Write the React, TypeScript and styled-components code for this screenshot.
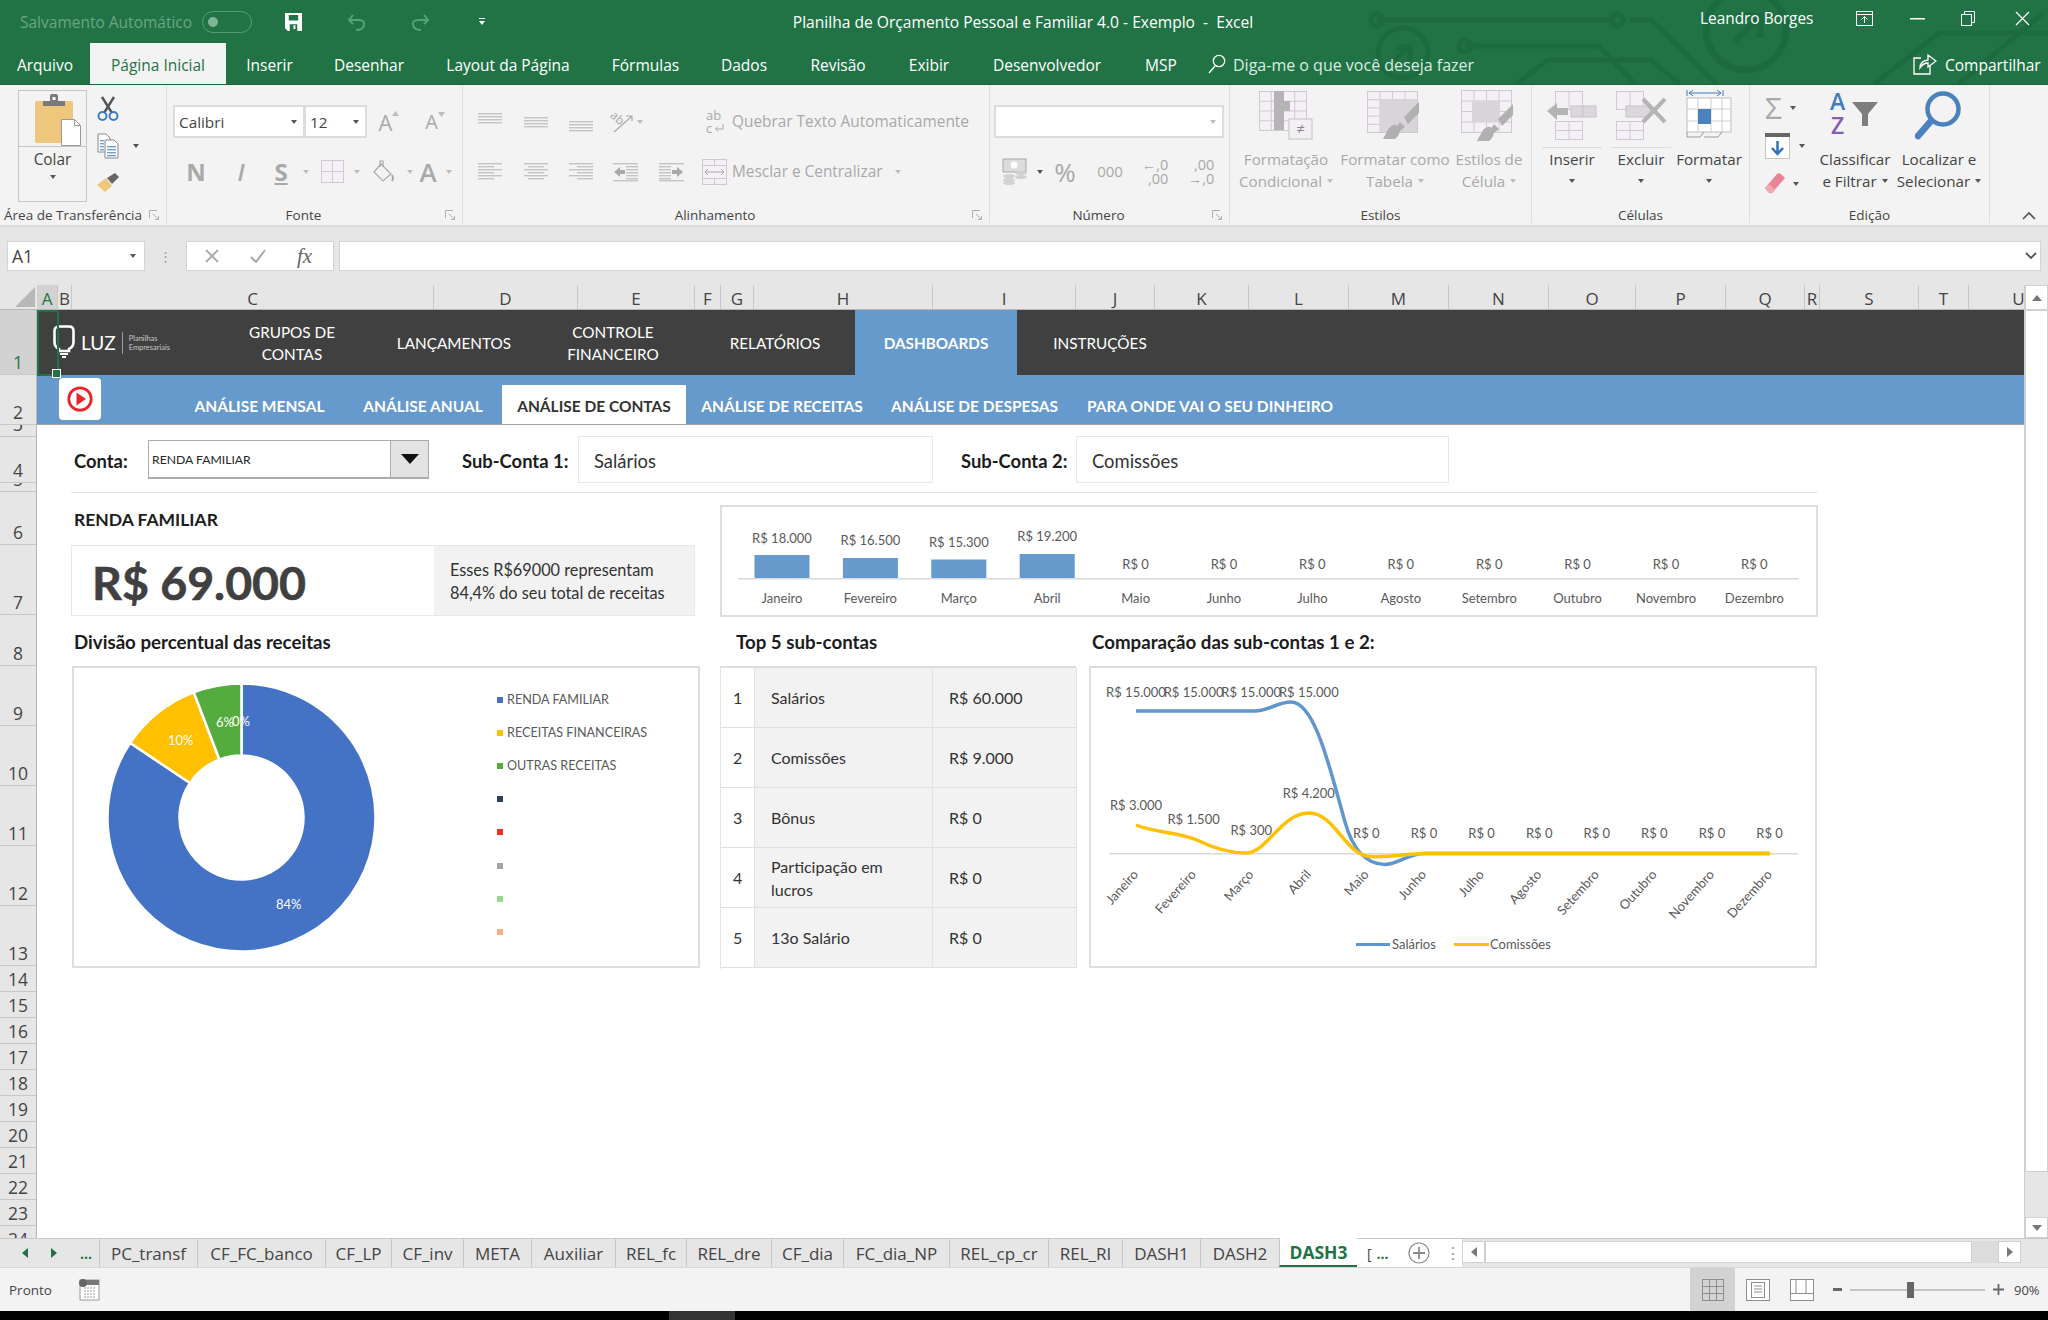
import React from 'react';
import styled, { createGlobalStyle } from 'styled-components';

const UI = `"Open Sans", "Noto Sans", sans-serif`;
const SHEET = `Lato, "Liberation Sans", sans-serif`;
const OFF = '#a9a9a9';

const GlobalStyle = createGlobalStyle`
  html, body { margin: 0; padding: 0; background: #fff; }
  body { width: 2048px; height: 1320px; overflow: hidden; font-family: ${UI}; }
  * { box-sizing: border-box; }
`;

// ---------- window frame ----------
const Page = styled.div`
  width: 2048px;
  height: 1320px;
  display: flex;
  flex-direction: column;
  overflow: hidden;
`;
const Header = styled.header`
  position: relative;
  height: 85px;
  background: #217346;
  color: #fff;
  border-bottom: 1px solid #1b6039;
`;
const Circuit = styled.svg`
  position: absolute;
  left: 0;
  top: 0;
`;
const TitleBar = styled.div`
  position: relative;
  height: 43px;
  display: flex;
  align-items: center;
`;
const AutoSave = styled.span`
  margin-left: 20px;
  width: 182px;
  font-size: 15.5px;
  color: #6aa587;
  white-space: nowrap;
`;
const Toggle = styled.span`
  width: 50px;
  height: 22px;
  flex: none;
  border: 1px solid #5a9a79;
  border-radius: 11px;
  display: flex;
  align-items: center;
  padding-left: 5px;
  &::before {
    content: '';
    width: 10px;
    height: 10px;
    border-radius: 50%;
    background: #7db59a;
  }
`;
const TitleSlot = styled.span<{ $w: number; $up?: boolean }>`
  width: ${p => p.$w}px;
  margin-top: ${p => (p.$up ? '-6px' : '0')};
  flex: none;
  display: flex;
  justify-content: center;
  align-items: center;
`;
const DocTitle = styled.span`
  margin-left: 287px;
  width: 464px;
  flex: none;
  text-align: center;
  font-size: 15.6px;
  white-space: pre;
`;
const UserName = styled.span`
  margin-left: 445px;
  margin-top: -6px;
  width: 126px;
  flex: none;
  font-size: 15.4px;
  white-space: nowrap;
`;
const TabRow = styled.nav`
  position: relative;
  height: 41px;
  display: flex;
  align-items: stretch;
`;
const MenuTab = styled.span<{ $active?: boolean; $w: number }>`
  width: ${p => p.$w}px;
  flex: none;
  display: flex;
  align-items: center;
  justify-content: center;
  padding-top: 2px;
  font-size: 15.5px;
  white-space: nowrap;
  background: ${p => (p.$active ? '#f3f3f3' : 'transparent')};
  color: ${p => (p.$active ? '#217346' : '#fff')};
`;
const SearchIconWrap = styled.span`
  margin-left: 10px;
  display: flex;
  align-items: center;
`;
const SearchHint = styled.span`
  margin-left: 7px;
  padding-top: 2px;
  width: 445px;
  font-size: 16px;
  color: #dcebe3;
  white-space: nowrap;
  display: flex;
  align-items: center;
`;
const ShareIconWrap = styled.span`
  margin-left: 235px;
  display: flex;
  align-items: center;
`;
const ShareText = styled.span`
  margin-left: 8px;
  padding-top: 2px;
  font-size: 15.5px;
  white-space: nowrap;
  display: flex;
  align-items: center;
`;

// ---------- ribbon ----------
const Ribbon = styled.section`
  height: 142px;
  display: flex;
  background: #f3f3f3;
  border-bottom: 2px solid #dcdcdc;
  color: #444;
`;
const Group = styled.div<{ $w: number }>`
  width: ${p => p.$w}px;
  flex: none;
  display: flex;
  flex-direction: column;
  border-right: 1px solid #e0e0e0;
  margin-bottom: 2px;
`;
const GroupBody = styled.div<{ $pad?: number; $column?: boolean }>`
  flex: 1;
  min-height: 0;
  display: flex;
  flex-direction: ${p => (p.$column ? 'column' : 'row')};
  padding-left: ${p => p.$pad ?? 0}px;
`;
const GroupLabel = styled.div<{ $shift?: number; $start?: boolean }>`
  position: relative;
  height: 15px;
  text-align: ${p => (p.$start ? 'left' : 'center')};
  padding-left: ${p => (p.$start ? 4 : 0)}px;
  padding-right: ${p => p.$shift ?? 0}px;
  line-height: 15px;
  font-size: 13.5px;
  white-space: nowrap;
  color: #444;
`;
const Launcher = styled.svg`
  position: absolute;
  right: 6px;
  top: 2px;
`;
const RibbonEnd = styled.div`
  flex: 1;
  display: flex;
  justify-content: flex-end;
  align-items: flex-end;
  padding: 0 12px 5px 0;
`;
const PasteButton = styled.div`
  width: 69px;
  height: 112px;
  margin-top: 5px;
  border: 1px solid #c6c6c6;
  display: flex;
  flex-direction: column;
  align-items: center;
  flex: none;
`;
const PasteIcon = styled.div`
  height: 56px;
  width: 100%;
  border-bottom: 1px solid #c6c6c6;
  display: flex;
  justify-content: center;
`;
const PasteLabel = styled.div`
  margin-top: 3px;
  height: 25px;
  font-size: 15.4px;
  line-height: 20px;
`;
const ClipTools = styled.div`
  margin: 11px 0 0 10px;
  display: flex;
  flex-direction: column;
  gap: 11px;
`;
const ClipTool = styled.div`
  display: flex;
  align-items: center;
  gap: 14px;
  height: 26px;
`;
const Caret = styled.span<{ $off?: boolean }>`
  display: inline-block;
  width: 0;
  height: 0;
  flex: none;
  border-left: 3.5px solid transparent;
  border-right: 3.5px solid transparent;
  border-top: 4px solid ${p => (p.$off ? '#bcbcbc' : '#555')};
`;
const RibbonRow = styled.div<{ $top: number }>`
  display: flex;
  align-items: center;
  height: 33px;
  margin-top: ${p => p.$top}px;
  white-space: nowrap;
`;
const Slot = styled.span<{ $w: number }>`
  width: ${p => p.$w}px;
  flex: none;
  display: flex;
  align-items: center;
  justify-content: center;
  gap: 3px;
`;
const Combo = styled.div<{ $w: number }>`
  width: ${p => p.$w}px;
  height: 33px;
  flex: none;
  background: #fff;
  border: 2px solid #dcdcdc;
  margin-right: -1px;
  display: flex;
  align-items: center;
  justify-content: space-between;
  padding: 0 6px 0 4px;
  font-size: 15.3px;
  color: #444;
`;
const Glyph = styled.span<{ $size: number; $weight?: number; $italic?: boolean; $line?: boolean }>`
  font-size: ${p => p.$size}px;
  font-weight: ${p => p.$weight ?? 400};
  font-style: ${p => (p.$italic ? 'italic' : 'normal')};
  text-decoration: ${p => (p.$line ? 'underline' : 'none')};
  line-height: 1;
  color: ${OFF};
  font-family: ${UI};
`;
const GrowGlyph = styled.span`
  display: flex;
  align-items: flex-start;
  gap: 0;
`;
const DimText = styled.span<{ $left?: number }>`
  font-size: 15.4px;
  color: ${OFF};
  margin-left: ${p => p.$left ?? 0}px;
`;
const Decimal = styled.span`
  font-size: 14.5px;
  line-height: 14px;
  color: ${OFF};
  text-align: right;
  display: block;
`;
const BigButton = styled.div<{ $w: number }>`
  width: ${p => p.$w}px;
  flex: none;
  display: flex;
  flex-direction: column;
  align-items: center;
  padding-top: 5px;
`;
const BigIcon = styled.div<{ $rule?: boolean }>`
  height: 58px;
  width: ${p => (p.$rule ? '60px' : 'auto')};
  display: flex;
  align-items: flex-start;
  justify-content: center;
  border-bottom: ${p => (p.$rule ? '1px solid #dcdcdc' : 'none')};
`;
const BigLabel = styled.div<{ $off?: boolean }>`
  font-size: 15.2px;
  line-height: 22px;
  text-align: center;
  white-space: nowrap;
  color: ${p => (p.$off ? OFF : '#444')};
  display: flex;
  flex-direction: column;
  align-items: center;
`;
const LabelLine = styled.span`
  height: 22px;
  display: flex;
  align-items: center;
  gap: 5px;
`;
const EditTools = styled.div`
  width: 71px;
  flex: none;
  padding: 9px 0 0 15px;
  display: flex;
  flex-direction: column;
  gap: 11px;
`;
const EditTool = styled.div`
  height: 27px;
  display: flex;
  align-items: center;
  gap: 8px;
`;

// ---------- formula bar ----------
const FormulaBar = styled.div`
  height: 58px;
  background: #e6e6e6;
  display: flex;
  align-items: center;
  padding: 0 7px;
`;
const NameBox = styled.div`
  width: 138px;
  height: 30px;
  background: #fff;
  border: 1px solid #d4d4d4;
  display: flex;
  align-items: center;
  justify-content: space-between;
  padding: 0 8px 0 4px;
  font-size: 17.5px;
  color: #444;
`;
const Dots = styled.span`
  width: 41px;
  text-align: center;
  color: #9a9a9a;
  font-size: 13px;
  line-height: 6px;
`;
const FxBox = styled.div`
  width: 148px;
  height: 30px;
  background: #fff;
  border: 1px solid #d4d4d4;
  display: flex;
  align-items: center;
  gap: 31px;
  padding-left: 18px;
`;
const FxText = styled.span`
  font-family: "Liberation Serif", serif;
  font-style: italic;
  font-size: 21px;
  color: #666;
`;
const FormulaInput = styled.div`
  flex: 1;
  height: 30px;
  margin-left: 5px;
  background: #fff;
  border: 1px solid #d4d4d4;
  display: flex;
  align-items: center;
  justify-content: flex-end;
  padding-right: 3px;
`;

// ---------- sheet frame ----------
const SheetArea = styled.div`
  height: 953px;
  display: flex;
`;
const SheetMain = styled.div`
  flex: 1;
  display: flex;
  flex-direction: column;
  min-width: 0;
`;
const ColumnHeader = styled.div`
  height: 25px;
  display: flex;
  overflow: hidden;
  background: #e6e6e6;
  border-bottom: 1px solid #b8b8b8;
`;
const Corner = styled.div`
  width: 37px;
  flex: none;
  display: flex;
  align-items: flex-end;
  justify-content: flex-end;
  padding: 0 2px 2px 0;
`;
const ColCell = styled.div<{ $w: number; $on?: boolean }>`
  width: ${p => p.$w}px;
  flex: none;
  text-align: center;
  font-size: 17px;
  line-height: 27px;
  overflow: hidden;
  color: ${p => (p.$on ? '#217346' : '#444')};
  background: ${p => (p.$on ? '#d2d2d2' : 'transparent')};
  border-right: 1px solid #c8c8c8;
`;
const SheetBody = styled.div`
  flex: 1;
  display: flex;
  min-height: 0;
`;
const RowHeaders = styled.div`
  width: 37px;
  flex: none;
  background: #e6e6e6;
  border-right: 1px solid #b8b8b8;
  overflow: hidden;
`;
const RowCell = styled.div<{ $h: number; $on?: boolean }>`
  height: ${p => p.$h}px;
  display: flex;
  align-items: flex-end;
  justify-content: center;
  overflow: hidden;
  font-size: 17.5px;
  line-height: 23px;
  color: ${p => (p.$on ? '#217346' : '#444')};
  background: ${p => (p.$on ? '#d2d2d2' : 'transparent')};
  border-bottom: 1px solid #c8c8c8;
`;
const Canvas = styled.main`
  position: relative;
  flex: 1;
  min-width: 0;
  overflow: hidden;
  background: #fff;
  font-family: ${SHEET};
  color: #262626;
`;
const Selection = styled.div`
  position: absolute;
  left: 0;
  top: 0;
  width: 22px;
  height: 66px;
  border: 2px solid #217346;
  &::after {
    content: '';
    position: absolute;
    right: -4px;
    bottom: -4px;
    width: 7px;
    height: 7px;
    background: #217346;
    border: 1px solid #fff;
  }
`;
const VScroll = styled.div`
  width: 24px;
  flex: none;
  display: flex;
  flex-direction: column;
  background: #e6e6e6;
  border-left: 1px solid #cfcfcf;
`;
const ScrollArrow = styled.div<{ $h: number }>`
  height: ${p => p.$h}px;
  flex: none;
  background: #fff;
  border: 1px solid #d0d0d0;
  display: flex;
  align-items: center;
  justify-content: center;
`;
const ScrollThumb = styled.div`
  height: 862px;
  flex: none;
  background: #fff;
  border: 1px solid #d0d0d0;
`;
const ScrollRest = styled.div`
  flex: 1;
`;

// ---------- dashboard nav ----------
const NavBar = styled.div`
  height: 65px;
  display: flex;
  background: #404040;
  color: #fff;
`;
const Logo = styled.div`
  width: 163px;
  flex: none;
  display: flex;
  align-items: center;
  padding-left: 15px;
`;
const LogoWord = styled.span`
  margin-left: 5px;
  font-size: 19px;
  padding-right: 6px;
  border-right: 1px solid #9a9a9a;
  line-height: 22px;
`;
const LogoSub = styled.span`
  margin-left: 6px;
  font-size: 7.5px;
  line-height: 9px;
  color: #c8c8c8;
`;
const NavItem = styled.div<{ $w: number; $gap?: number; $active?: boolean }>`
  width: ${p => p.$w}px;
  margin-right: ${p => p.$gap ?? 0}px;
  flex: none;
  display: flex;
  align-items: center;
  justify-content: center;
  text-align: center;
  font-size: 15.3px;
  line-height: 22px;
  font-weight: ${p => (p.$active ? 700 : 400)};
  background: ${p => (p.$active ? '#6699cc' : 'transparent')};
`;
const SubNav = styled.div`
  height: 50px;
  display: flex;
  align-items: flex-end;
  background: #6699cc;
  border-bottom: 1px solid #a5a5a5;
  padding-left: 22px;
`;
const PlayBox = styled.div`
  width: 42px;
  height: 42px;
  margin: 0 74px 4px 0;
  flex: none;
  background: #fff;
  border-radius: 4px;
  display: flex;
  align-items: center;
  justify-content: center;
`;
const SubItem = styled.div<{ $w: number; $active?: boolean }>`
  width: ${p => p.$w}px;
  height: 39px;
  flex: none;
  padding-top: 2px;
  display: flex;
  align-items: center;
  justify-content: center;
  font-size: 15.5px;
  font-weight: 700;
  white-space: nowrap;
  background: ${p => (p.$active ? '#fff' : 'transparent')};
  color: ${p => (p.$active ? '#333' : '#fff')};
`;
const Content = styled.div`
  margin-left: 34px;
  width: 1747px;
`;
const FilterRow = styled.div`
  height: 68px;
  padding-top: 11px;
  display: flex;
  align-items: flex-start;
  border-bottom: 1px solid #e4e4e4;
`;
const FilterLabel = styled.span<{ $left: number; $w: number }>`
  margin-left: ${p => p.$left}px;
  width: ${p => p.$w}px;
  height: 47px;
  padding-top: 2px;
  flex: none;
  display: flex;
  align-items: center;
  font-size: 18.4px;
  font-weight: 700;
  color: #1c1c1c;
  white-space: nowrap;
`;
const Select = styled.div`
  width: 281px;
  height: 39px;
  margin-top: 4px;
  flex: none;
  display: flex;
  border: 1px solid #ababab;
  border-bottom-width: 2px;
  align-items: center;
  justify-content: space-between;
  font-size: 12.2px;
  padding-left: 3px;
`;
const SelectArrow = styled.span`
  width: 38px;
  height: 100%;
  background: #e3e3e3;
  border-left: 1px solid #ababab;
  display: flex;
  align-items: center;
  justify-content: center;
  &::before {
    content: '';
    border-left: 9px solid transparent;
    border-right: 9px solid transparent;
    border-top: 10px solid #111;
  }
`;
const ValueBox = styled.div<{ $w: number }>`
  width: ${p => p.$w}px;
  height: 47px;
  flex: none;
  border: 1px solid #e8e8e8;
  display: flex;
  align-items: center;
  padding: 2px 0 0 15px;
  font-size: 18.4px;
  color: #333;
`;
const TopRow = styled.div`
  height: 124px;
  display: flex;
  gap: 25px;
`;
const KpiColumn = styled.div`
  width: 624px;
  flex: none;
`;
const SectionTitle = styled.h2<{ $h: number; $left?: number; $size?: number }>`
  margin: 0;
  height: ${p => p.$h}px;
  padding-left: ${p => p.$left ?? 3}px;
  display: flex;
  align-items: center;
  font-size: ${p => p.$size ?? 18.7}px;
  font-weight: 700;
  color: #1c1c1c;
  white-space: nowrap;
`;
const Kpi = styled.div`
  height: 71px;
  display: flex;
  border: 1px solid #e8e8e8;
`;
const KpiValue = styled.div`
  width: 362px;
  flex: none;
  padding: 4px 0 0 20px;
  display: flex;
  align-items: center;
  font-size: 46.5px;
  font-weight: 700;
  color: #404040;
  -webkit-text-stroke: 0.6px #404040;
  white-space: nowrap;
  line-height: 1;
`;
const KpiNote = styled.div`
  flex: 1;
  background: #f2f2f2;
  padding-left: 16px;
  display: flex;
  flex-direction: column;
  justify-content: center;
  font-size: 16.3px;
  line-height: 23px;
  color: #333;
  white-space: nowrap;
`;
const BarCard = styled.div`
  width: 1098px;
  height: 112px;
  margin-top: 12px;
  border: 2px solid #dedede;
`;
const ChartSvg = styled.svg`
  display: block;
  font-family: ${SHEET};
  font-size: 13px;
  fill: #595959;
`;
const BottomRow = styled.div`
  display: flex;
  margin-left: 1px;
`;
const Panel = styled.div<{ $w: number; $gap: number }>`
  width: ${p => p.$w}px;
  flex: none;
  margin-right: ${p => p.$gap}px;
`;
const Card = styled.div`
  height: 302px;
  border: 2px solid #dedede;
  display: flex;
`;
const Legend = styled.ul`
  list-style: none;
  margin: 0;
  padding: 15px 0 0 25px;
  display: flex;
  flex-direction: column;
`;
const LegendItem = styled.li`
  height: 33.2px;
  display: flex;
  align-items: center;
  gap: 4px;
  font-size: 12.6px;
  color: #595959;
  white-space: nowrap;
`;
const LegendDot = styled.span<{ $color: string }>`
  width: 6px;
  height: 6px;
  background: ${p => p.$color};
`;
const TopTable = styled.div`
  height: 303px;
  display: grid;
  grid-template-columns: 34px 178px 144px;
  grid-auto-rows: 60px;
  border-top: 2px solid #dedede;
  border-left: 1px solid #e4e4e4;
`;
const TopCell = styled.div<{ $shade?: boolean }>`
  display: flex;
  align-items: center;
  padding: 0 ${p => (p.$shade ? 24 : 0)}px 0 ${p => (p.$shade ? 16 : 12)}px;
  font-size: 16px;
  line-height: 23px;
  color: #333;
  background: ${p => (p.$shade ? '#f2f2f2' : '#fff')};
  border-bottom: 1.5px solid #dedede;
  border-right: 1px solid #e2e2e2;
`;

// ---------- sheet tabs + status ----------
const TabsBar = styled.div`
  height: 30px;
  display: flex;
  align-items: stretch;
  background: #e6e6e6;
  border-top: 1px solid #c8c8c8;
  border-bottom: 1px solid #d6d6d6;
`;
const TabNav = styled.div`
  width: 99px;
  flex: none;
  display: flex;
  align-items: center;
  padding-left: 22px;
  gap: 23px;
  color: #217346;
  font-size: 14px;
  font-weight: 700;
`;
const SheetTab = styled.div<{ $w: number; $active?: boolean }>`
  width: ${p => p.$w}px;
  flex: none;
  display: flex;
  align-items: center;
  justify-content: center;
  font-size: ${p => (p.$active ? 17.5 : 17)}px;
  white-space: nowrap;
  overflow: hidden;
  font-weight: ${p => (p.$active ? 700 : 400)};
  color: ${p => (p.$active ? '#217346' : '#444')};
  background: ${p => (p.$active ? '#fff' : 'transparent')};
  border-left: 1px solid #c8c8c8;
  border-bottom: ${p => (p.$active ? '2px solid #217346' : 'none')};
  margin-top: ${p => (p.$active ? '-1px' : '0')};
`;
const MoreTab = styled.div`
  width: 43px;
  flex: none;
  display: flex;
  align-items: center;
  padding-left: 10px;
  gap: 5px;
  font-size: 14px;
  color: #444;
  white-space: nowrap;
  background: #fff;
  overflow: hidden;
`;
const MoreDots = styled.span`
  color: #217346;
  font-weight: 700;
`;
const AddSheet = styled.div`
  width: 62px;
  flex: none;
  display: flex;
  align-items: center;
  padding-left: 8px;
  gap: 15px;
  color: #9a9a9a;
  background: #fff;
`;
const HScroll = styled.div`
  flex: 1;
  margin: 2px 27px 4px 0;
  display: flex;
  background: #dcdcdc;
`;
const HArrow = styled.div`
  width: 23px;
  flex: none;
  background: #fff;
  border: 1px solid #d0d0d0;
  display: flex;
  align-items: center;
  justify-content: center;
`;
const HThumb = styled.div`
  width: 487px;
  flex: none;
  background: #fff;
  border: 1px solid #d0d0d0;
`;
const HSpace = styled.div`
  flex: 1;
`;
const StatusBar = styled.footer`
  height: 43px;
  background: #f3f3f3;
  display: flex;
  align-items: stretch;
  color: #444;
  font-size: 13.5px;
`;
const StatusLeft = styled.div`
  flex: 1;
  display: flex;
  align-items: center;
  padding-left: 9px;
  gap: 27px;
`;
const ViewButton = styled.div<{ $w: number; $active?: boolean }>`
  width: ${p => p.$w}px;
  flex: none;
  display: flex;
  align-items: center;
  justify-content: center;
  background: ${p => (p.$active ? '#d2d2d2' : 'transparent')};
`;
const Zoomer = styled.div`
  width: 224px;
  flex: none;
  padding-left: 9px;
  display: flex;
  align-items: center;
  gap: 8px;
  font-size: 13px;
`;
const ZoomTrack = styled.div`
  position: relative;
  width: 135px;
  height: 2px;
  background: #c4c4c4;
`;
const ZoomThumb = styled.span`
  position: absolute;
  left: 57px;
  top: -7px;
  width: 7px;
  height: 16px;
  background: #666;
`;
const ZoomValue = styled.span`
  margin-left: 2px;
`;
const BlackBar = styled.div`
  height: 9px;
  background: #000;
  padding-left: 669px;
`;
const BlackKey = styled.div`
  width: 66px;
  height: 9px;
  background: #333;
`;

// ---------- icons ----------
const Bars = ({ x, y, w, rows, gap = 3, color = '#c4c4c4', insets = [] }: {
  x: number; y: number; w: number; rows: number; gap?: number; color?: string; insets?: [number, number][];
}) => (
  <>
    {Array.from({ length: rows }, (_, i) => {
      const [l, r] = insets[i % (insets.length || 1)] ?? [0, 0];
      return <rect key={i} x={x + l} y={y + i * gap} width={w - l - r} height={1.4} fill={color} />;
    })}
  </>
);

const CellGrid = ({ x, y, w, h, cols, rows, fill = '#f5f0f6', line = '#cfc9d1' }: {
  x: number; y: number; w: number; h: number; cols: number; rows: number; fill?: string; line?: string;
}) => (
  <g>
    <rect x={x + 0.5} y={y + 0.5} width={w} height={h} fill={fill} stroke={line} />
    {Array.from({ length: cols - 1 }, (_, i) => (
      <line key={i} x1={x + ((i + 1) * w) / cols + 0.5} x2={x + ((i + 1) * w) / cols + 0.5} y1={y} y2={y + h} stroke={line} />
    ))}
    {Array.from({ length: rows - 1 }, (_, i) => (
      <line key={i} y1={y + ((i + 1) * h) / rows + 0.5} y2={y + ((i + 1) * h) / rows + 0.5} x1={x} x2={x + w} stroke={line} />
    ))}
  </g>
);

const AllIcons = {
  Paste: () => (
    <svg width="56" height="55" viewBox="0 0 56 55">
      <rect x="10" y="10" width="38" height="42" rx="2" fill="#efc77c" />
      <path d="M18 10 h7 v-5 q0 -2 2 -2 h4 q2 0 2 2 v5 h7 v5 h-22z" fill="#7a7a7a" />
      <rect x="27.5" y="6" width="3" height="3" fill="#fff" />
      <path d="M36.5 28.5 h13 l6 6 v20 h-19z" fill="#fff" stroke="#9a9a9a" />
      <path d="M49.5 28.5 v6 h6" fill="none" stroke="#9a9a9a" />
    </svg>
  ),
  Scissors: () => (
    <svg width="22" height="26" viewBox="0 0 22 26" fill="none">
      <path d="M5 1 L15 17 M17 1 L7 17" stroke="#555" strokeWidth="2.4" />
      <circle cx="5.5" cy="20" r="4" stroke="#3f7cbf" strokeWidth="2" />
      <circle cx="16.5" cy="20" r="4" stroke="#3f7cbf" strokeWidth="2" />
    </svg>
  ),
  Copy: () => (
    <svg width="22" height="26" viewBox="0 0 22 26">
      <path d="M1 1 h8 l4 4 v14 h-12z" fill="#fff" stroke="#888" />
      <path d="M8 7 h9 l4 4 v14 h-13z" fill="#fff" stroke="#888" />
      <Bars x={10} y={13} w={9} rows={4} color="#6d9fd6" />
      <Bars x={3} y={7} w={4} rows={4} color="#6d9fd6" />
    </svg>
  ),
  FormatBrush: () => (
    <svg width="23" height="20" viewBox="0 0 23 20">
      <path d="M0 12 L9 5 L15 13 L8 19 Z" fill="#efc77c" />
      <path d="M10 5 L18 0 L22 4 L15 11 Z" fill="#666" />
    </svg>
  ),
  Borders: () => (
    <svg width="25" height="25" viewBox="0 0 25 25"><CellGrid x={1} y={1} w={22} h={22} cols={2} rows={2} /></svg>
  ),
  Fill: () => (
    <svg width="22" height="24" viewBox="0 0 22 24" fill="none" stroke={OFF} strokeWidth="1.2">
      <path d="M9 4 L19 14 L11 21 L2 12 Z" />
      <path d="M8 7 V1 h3 v6" />
      <path d="M20 15 q2 3 0 6" strokeWidth="2" />
    </svg>
  ),
  Orient: () => (
    <svg width="24" height="24" viewBox="0 0 24 24" fill="none" stroke={OFF} strokeWidth="1.2">
      <path d="M4 22 L22 6 M16 6 h6 v5" />
      <text x="0" y="11" fontSize="12" fill={OFF} stroke="none" transform="rotate(42 6 8)" fontFamily={UI}>ab</text>
    </svg>
  ),
  Wrap: () => (
    <svg width="20" height="26" viewBox="0 0 20 26">
      <text x="0" y="11" fontSize="13" fill={OFF} fontFamily={UI}>ab</text>
      <text x="0" y="24" fontSize="13" fill={OFF} fontFamily={UI}>c</text>
      <path d="M17 15 v5 h-7 m2 -2.5 l-2.5 2.5 l2.5 2.5" fill="none" stroke={OFF} />
    </svg>
  ),
  Outdent: ({ flip }: { flip?: boolean }) => (
    <svg width="26" height="20" viewBox="0 0 26 20">
      <g transform={flip ? 'matrix(-1 0 0 1 26 0)' : undefined}>
        <Bars x={0} y={1} w={25} rows={1} />
        <Bars x={0} y={18} w={25} rows={1} />
        <Bars x={13} y={4} w={12} rows={5} gap={3} />
        <path d="M1 10 L7 5 V8 H12 V12 H7 V15 Z" fill={OFF} />
      </g>
    </svg>
  ),
  Merge: () => (
    <svg width="25" height="26" viewBox="0 0 25 26" fill="none">
      <rect x="0.5" y="0.5" width="24" height="25" fill="#f5f0f6" stroke="#cfc9d1" />
      <path d="M0 6.5 H25 M0 19.5 H25 M12.5 0 V6 M12.5 20 V26" stroke="#cfc9d1" />
      <path d="M3 13 H22 M6 10 L3 13 L6 16 M19 10 L22 13 L19 16" stroke={OFF} />
    </svg>
  ),
  Money: () => (
    <svg width="26" height="27" viewBox="0 0 26 27">
      <rect x="1" y="1" width="23" height="13" fill="#dcdcdc" stroke={OFF} />
      <circle cx="12" cy="7" r="3.5" fill="#fff" />
      <ellipse cx="7" cy="18" rx="6" ry="2" fill="#d2d2d2" />
      <ellipse cx="7" cy="22" rx="6" ry="2" fill="#d2d2d2" />
      <ellipse cx="7" cy="25" rx="6" ry="2" fill="#d2d2d2" />
      <ellipse cx="19" cy="15" rx="6" ry="2" fill="#d2d2d2" />
      <ellipse cx="19" cy="19" rx="6" ry="2" fill="#d2d2d2" />
    </svg>
  ),
  CondFormat: () => (
    <svg width="54" height="50" viewBox="0 0 54 50">
      <CellGrid x={0} y={1} w={47} h={39} cols={4} rows={4} />
      <rect x="15" y="1" width="10" height="39" fill="#b4b4b4" />
      <rect x="15" y="11" width="16" height="10" fill="#b4b4b4" />
      <rect x="30" y="29" width="23" height="20" fill="#f3f0f4" stroke="#c2c2c2" />
      <text x="41.5" y="44" fontSize="15" textAnchor="middle" fill="#888" fontFamily={UI}>≠</text>
    </svg>
  ),
  TableFormat: () => (
    <svg width="56" height="50" viewBox="0 0 56 50">
      <CellGrid x={0} y={1} w={50} h={41} cols={4} rows={5} />
      <rect x="13" y="9" width="37" height="33" fill="#d8d4da" />
      <path d="M16 49 L22 38 Q29 31 33 39 Q33 45 28 49 Z" fill="#b0b0b0" />
      <path d="M33 32 L38 37 L33 41 L30 37 Z M37 27 L52 12 V23 L41 34 Z" fill="#b0b0b0" />
    </svg>
  ),
  CellStyle: () => (
    <svg width="56" height="52" viewBox="0 0 56 52">
      <CellGrid x={0} y={0} w={50} h={42} cols={4} rows={4} />
      <rect x="11" y="11" width="28" height="21" fill="#d8d4da" />
      <path d="M16 51 L22 40 Q29 33 33 41 Q33 47 28 51 Z" fill="#b0b0b0" />
      <path d="M33 34 L38 39 L33 43 L30 39 Z M37 29 L52 14 V25 L41 36 Z" fill="#b0b0b0" />
    </svg>
  ),
  Insert: () => (
    <svg width="50" height="50" viewBox="0 0 50 50">
      <CellGrid x={8} y={1} w={27} h={18} cols={2} rows={1} />
      <CellGrid x={8} y={31} w={27} h={18} cols={2} rows={2} />
      <rect x="24" y="16" width="25" height="11" fill="#dbd7dc" stroke="#c6c2c8" />
      <path d="M36 16 V27" stroke="#c6c2c8" />
      <path d="M0 21 L10 13 V18 H21 V25 H10 V30 Z" fill="#b4b4b4" />
    </svg>
  ),
  Delete: () => (
    <svg width="54" height="50" viewBox="0 0 54 50">
      <CellGrid x={2} y={1} w={27} h={18} cols={2} rows={1} />
      <CellGrid x={2} y={31} w={27} h={18} cols={2} rows={2} />
      <rect x="12" y="16" width="24" height="11" fill="#dbd7dc" stroke="#c6c2c8" />
      <path d="M29 9 L51 32 M51 9 L29 32" stroke="#b4b4b4" strokeWidth="4" />
    </svg>
  ),
  Format: () => (
    <svg width="46" height="52" viewBox="0 0 46 52">
      <path d="M1 0 V6 M37 0 V6 M3 3 H35 M7 0 L3 3 L7 6 M31 0 L35 3 L31 6" stroke="#3f7cbf" fill="none" />
      <rect x="1" y="8" width="44" height="34" fill="#fff" stroke="#bdbdbd" />
      <path d="M12 8 V42 M25 8 V42 M36 8 V42 M1 19 H45 M1 31 H45" stroke="#cfcfcf" />
      <rect x="12" y="19" width="13" height="15" fill="#4a82bd" />
      <path d="M1 42 V47 H14 L18 42 M18 47 H32 L36 42" fill="none" stroke="#9a9a9a" />
    </svg>
  ),
  FillDown: () => (
    <svg width="26" height="26" viewBox="0 0 26 26">
      <rect x="0.5" y="0.5" width="24" height="25" fill="#fff" stroke="#c4c4c4" />
      <rect x="0" y="0" width="25" height="4" fill="#666" />
      <path d="M12.5 8 V20 M7 15 L12.5 21 L18 15" stroke="#2f75b5" strokeWidth="2.5" fill="none" />
    </svg>
  ),
  Eraser: () => (
    <svg width="20" height="21" viewBox="0 0 20 21">
      <path d="M0 15 L12 1 Q14 -1 17 2 L20 5 L7 20 Q5 21 3 19 Z" fill="#e98493" />
      <path d="M0 15 L4 11 L10 17 L7 20 Q5 21 3 19 Z" fill="#f1a9b4" />
    </svg>
  ),
  Sort: () => (
    <svg width="50" height="46" viewBox="0 0 50 46">
      <text x="0" y="20" fontSize="23" fontWeight="600" fill="#3f7cbf" fontFamily={UI}>A</text>
      <text x="1" y="44" fontSize="23" fontWeight="600" fill="#8a5bb5" fontFamily={UI}>Z</text>
      <path d="M22 12 H48 L38 24 V36 H32 V24 Z" fill="#7e7e7e" />
    </svg>
  ),
  Find: () => (
    <svg width="48" height="50" viewBox="0 0 48 50" fill="none" stroke="#4a82bd">
      <circle cx="28" cy="19" r="15.5" strokeWidth="4.5" />
      <path d="M16 31 L3 46" strokeWidth="6.5" strokeLinecap="round" />
    </svg>
  ),
};

const Launch = () => (
  <Launcher width="11" height="11" viewBox="0 0 11 11" fill="none" stroke="#b0b0b0">
    <path d="M0.5 8 V0.5 H8 M4 4 L9 9 M6 9.5 H9.5 V6" />
  </Launcher>
);
const MiniArrow = ({ left, color = '#777' }: { left?: boolean; color?: string }) => (
  <svg width="6" height="10" viewBox="0 0 6 10"><path d={left ? 'M6 0 L0 5 L6 10 Z' : 'M0 0 L6 5 L0 10 Z'} fill={color} /></svg>
);
const UpArrow = () => <svg width="10" height="6" viewBox="0 0 10 6"><path d="M0 6 L5 0 L10 6 Z" fill="#777" /></svg>;
const DownArrow = () => <svg width="10" height="6" viewBox="0 0 10 6"><path d="M0 0 L5 6 L10 0 Z" fill="#777" /></svg>;
const FontStep = ({ down }: { down?: boolean }) => (
  <svg width="7" height="5" viewBox="0 0 7 5"><path d={down ? 'M0 0 H7 L3.5 5 Z' : 'M0 5 H7 L3.5 0 Z'} fill="#bcbcbc" /></svg>
);

// ---------- data ----------
const MENU: [string, number][] = [
  ['Arquivo', 90], ['Página Inicial', 136], ['Inserir', 87], ['Desenhar', 112], ['Layout da Página', 166],
  ['Fórmulas', 109], ['Dados', 88], ['Revisão', 100], ['Exibir', 82], ['Desenvolvedor', 154], ['MSP', 74],
];
const COLUMNS: [string, number][] = [
  ['A', 21], ['B', 14], ['C', 362], ['D', 144], ['E', 117], ['F', 26], ['G', 33], ['H', 179], ['I', 143], ['J', 79], ['K', 94],
  ['L', 100], ['M', 100], ['N', 100], ['O', 87], ['P', 90], ['Q', 79], ['R', 15], ['S', 99], ['T', 50], ['U', 100],
];
const ROWS: [string, number][] = [
  ['1', 65], ['2', 50], ['3', 12], ['4', 46], ['5', 9], ['6', 53], ['7', 70], ['8', 51], ['9', 60], ['10', 60], ['11', 60], ['12', 60], ['13', 60],
  ['14', 26], ['15', 26], ['16', 26], ['17', 26], ['18', 26], ['19', 26], ['20', 26], ['21', 26], ['22', 26], ['23', 26], ['24', 26],
];
const SUB_TABS: [string, number][] = [
  ['ANÁLISE MENSAL', 169], ['ANÁLISE ANUAL', 158], ['ANÁLISE DE CONTAS', 184], ['ANÁLISE DE RECEITAS', 192], ['ANÁLISE DE DESPESAS', 193], ['PARA ONDE VAI O SEU DINHEIRO', 278],
];
const MONTHS = ['Janeiro', 'Fevereiro', 'Março', 'Abril', 'Maio', 'Junho', 'Julho', 'Agosto', 'Setembro', 'Outubro', 'Novembro', 'Dezembro'];
const REVENUE = [
  { value: 'R$ 18.000', top: 48, label: 36 }, { value: 'R$ 16.500', top: 51, label: 38 },
  { value: 'R$ 15.300', top: 52.5, label: 40 }, { value: 'R$ 19.200', top: 47, label: 34 },
];
const LEGEND: [string, string][] = [
  ['RENDA FAMILIAR', '#4472c4'], ['RECEITAS FINANCEIRAS', '#ffc000'], ['OUTRAS RECEITAS', '#55ac3e'],
  ['', '#2f3e5c'], ['', '#ee3124'], ['', '#a5a5a5'], ['', '#9bd88f'], ['', '#f4b183'],
];
const TOP5: [string, string, string][] = [
  ['1', 'Salários', 'R$ 60.000'], ['2', 'Comissões', 'R$ 9.000'], ['3', 'Bônus', 'R$ 0'], ['4', 'Participação em lucros', 'R$ 0'], ['5', '13o Salário', 'R$ 0'],
];
const SHEETS: [string, number][] = [
  ['PC_transf', 98], ['CF_FC_banco', 128], ['CF_LP', 66], ['CF_inv', 72], ['META', 68], ['Auxiliar', 84], ['REL_fc', 71], ['REL_dre', 85],
  ['CF_dia', 72], ['FC_dia_NP', 106], ['REL_cp_cr', 99], ['REL_RI', 74], ['DASH1', 78], ['DASH2', 79],
];

const sector = (cx: number, cy: number, R: number, r: number, from: number, to: number) => {
  const pt = (rad: number, f: number) => {
    const a = (f * 2 * Math.PI) - Math.PI / 2;
    return `${(cx + rad * Math.cos(a)).toFixed(2)} ${(cy + rad * Math.sin(a)).toFixed(2)}`;
  };
  const large = to - from > 0.5 ? 1 : 0;
  return `M${pt(R, from)} A${R} ${R} 0 ${large} 1 ${pt(R, to)} L${pt(r, to)} A${r} ${r} 0 ${large} 0 ${pt(r, from)} Z`;
};

const DonutChart = () => (
  <svg width="398" height="298" viewBox="0 0 398 298">
    <g stroke="#fff" strokeWidth="2.5">
      <path d={sector(167.5, 149.5, 134, 62, 0, 0.844)} fill="#4472c4" />
      <path d={sector(167.5, 149.5, 134, 62, 0.844, 0.942)} fill="#ffc000" />
      <path d={sector(167.5, 149.5, 134, 62, 0.942, 1)} fill="#55ac3e" />
    </g>
    <g fill="#fff" fontFamily={SHEET} fontSize="13">
      <text x="94" y="77">10%</text>
      <text x="142" y="59">6%</text>
      <text x="158" y="58">0%</text>
      <text x="202" y="241">84%</text>
    </g>
  </svg>
);

const BarChart = () => (
  <ChartSvg width="1094" height="108" viewBox="0 0 1094 108" textAnchor="middle">
    <rect x="16" y="71" width="1061" height="1.5" fill="#d9d9d9" />
    {MONTHS.map((m, i) => {
      const cx = 60 + i * 88.4;
      const r = REVENUE[i];
      return (
        <g key={m}>
          {r && <rect x={cx - 27.5} y={r.top} width={55} height={71 - r.top} fill="#6699cc" />}
          <text x={cx} y={r ? r.label : 62}>{r ? r.value : 'R$ 0'}</text>
          <text x={cx} y={95.5}>{m}</text>
        </g>
      );
    })}
  </ChartSvg>
);

// card origin is at x 1091, y 666 in sheet terms
const LineChart = () => {
  const xAt = (i: number) => 45 + i * 57.6;
  const blue = 'M45 43 L164 43 C177 43 187 34 200 34 C224 34 239 101 254 154 C261 179 274 196.5 294 196.5 C307 196.5 317 185.5 333 185.5 L679 185.5';
  const yellow = 'M45 157 C65 165 88 164 106 172 C122 180 138 185 155 185 C176 185 190 145 218 145 C244 145 254 187 279 188.5 C296 190 318 185.5 333 185.5 L679 185.5';
  const labels = [
    [0, 'R$ 15.000', 29], [1, 'R$ 15.000', 29], [2, 'R$ 15.000', 29], [3, 'R$ 15.000', 29],
    [0, 'R$ 3.000', 142], [1, 'R$ 1.500', 156], [2, 'R$ 300', 167], [3, 'R$ 4.200', 130],
  ] as [number, string, number][];
  return (
    <ChartSvg width="724" height="298" viewBox="0 0 724 298" textAnchor="middle">
      <rect x="18" y="185" width="689" height="1.5" fill="#d9d9d9" />
      <path d={blue} fill="none" stroke="#5f96cf" strokeWidth="3.5" />
      <path d={yellow} fill="none" stroke="#ffc000" strokeWidth="3.5" />
      {labels.map(([i, t, y]) => <text key={`${t}${i}${y}`} x={xAt(i)} y={y}>{t}</text>)}
      {MONTHS.slice(4).map((m, k) => <text key={m} x={xAt(k + 4)} y={170}>R$ 0</text>)}
      {MONTHS.map((m, i) => (
        <text key={m} textAnchor="end" transform={`translate(${xAt(i) + 3} 207) rotate(-48)`}>{m}</text>
      ))}
      <rect x="265" y="275" width="34" height="3" fill="#5f96cf" />
      <text x="301" y="281" textAnchor="start">Salários</text>
      <rect x="363" y="275" width="35" height="3" fill="#ffc000" />
      <text x="399" y="281" textAnchor="start">Comissões</text>
    </ChartSvg>
  );
};

export default function App() {
  return (
    <Page>
      <GlobalStyle />
      <Header>
        <Circuit width="2048" height="84" viewBox="0 0 2048 84" fill="none" stroke="#1e6a40" strokeWidth="5">
          <path d="M1377 20 H1615 M1630 20 H1651 L1717 84 M1465 46 H1599 L1635 84 M1517 84 L1547 60 H1651 L1680 84" />
          <circle cx="1377" cy="20" r="6" />
          <circle cx="1617" cy="20" r="6" />
          <circle cx="1465" cy="46" r="6" />
          <circle cx="1403" cy="53" r="25" />
          <path d="M1395 60 L1410 45 M1396 47 h14 v14" />
          <circle cx="1746" cy="30" r="40" strokeWidth="7" />
          <path d="M1735 42 L1758 18 M1738 16 h22 v22" strokeWidth="7" />
          <path d="M1874 84 L1939 33 H2048 M1959 84 L2043 13" />
        </Circuit>
        <TitleBar>
          <AutoSave>Salvamento Automático</AutoSave>
          <Toggle />
          <TitleSlot $w={82}>
            <svg width="17" height="18" viewBox="0 0 18 19" fill="#fff">
              <path d="M0 0 H18 V19 H3 L0 16 Z M4 2 V8 H14 V2 Z M5 12 V19 H13 V12 Z" fillRule="evenodd" />
              <rect x="9" y="13" width="2" height="4" />
            </svg>
          </TitleSlot>
          <TitleSlot $w={46}>
            <svg width="20" height="20" viewBox="0 0 20 20" fill="none" stroke="#57a07c" strokeWidth="2">
              <path d="M2 8 H12 Q18 8 17 13 Q16 18 9 18 M6 3 L2 8 L6 12" />
            </svg>
          </TitleSlot>
          <TitleSlot $w={80}>
            <svg width="20" height="20" viewBox="0 0 20 20" fill="none" stroke="#57a07c" strokeWidth="2">
              <path d="M18 8 H8 Q2 8 3 13 Q4 18 11 18 M14 3 L18 8 L14 12" />
            </svg>
          </TitleSlot>
          <TitleSlot $w={44}>
            <svg width="8" height="8" viewBox="0 0 8 8" fill="#fff"><rect x="1" y="0" width="6" height="1" /><path d="M1 3 H7 L4 7 Z" /></svg>
          </TitleSlot>
          <DocTitle>Planilha de Orçamento Pessoal e Familiar 4.0 - Exemplo  -  Excel</DocTitle>
          <UserName>Leandro Borges</UserName>
          <TitleSlot $w={76} $up>
            <svg width="17" height="15" viewBox="0 0 17 15" fill="none" stroke="#fff"><rect x="0.5" y="0.5" width="16" height="14" /><path d="M0 3.5 H17 M8.5 12 V6 M5.5 8.5 L8.5 5.5 L11.5 8.5" /></svg>
          </TitleSlot>
          <TitleSlot $w={30} $up><svg width="15" height="2" viewBox="0 0 15 2"><rect width="15" height="1.5" fill="#fff" /></svg></TitleSlot>
          <TitleSlot $w={72} $up>
            <svg width="14" height="15" viewBox="0 0 14 15" fill="none" stroke="#fff"><rect x="0.5" y="3.5" width="10" height="11" /><path d="M3.5 3 V0.5 H13.5 V11.5 H11" /></svg>
          </TitleSlot>
          <TitleSlot $w={36} $up>
            <svg width="15" height="15" viewBox="0 0 15 15" stroke="#fff" strokeWidth="1.2"><path d="M1 1 L14 14 M14 1 L1 14" /></svg>
          </TitleSlot>
        </TitleBar>
        <TabRow>
          {MENU.map(([t, w], i) => <MenuTab key={t} $w={w} $active={i === 1}>{t}</MenuTab>)}
          <SearchIconWrap>
            <svg width="18" height="20" viewBox="0 0 18 20" fill="none" stroke="#fff" strokeWidth="1.3"><circle cx="11" cy="7" r="5.7" /><path d="M7 12 L1 19" /></svg>
          </SearchIconWrap>
          <SearchHint>Diga-me o que você deseja fazer</SearchHint>
          <ShareIconWrap>
            <svg width="24" height="22" viewBox="0 0 24 22" fill="none" stroke="#fff" strokeWidth="1.3"><path d="M8 5 H1 V21 H17 V13 M7 15 Q7 8 15 7 V2 L23 8 L15 14 V10 Q10 10 7 15 Z" /></svg>
          </ShareIconWrap>
          <ShareText>Compartilhar</ShareText>
        </TabRow>
      </Header>

      <Ribbon>
        <Group $w={167}>
          <GroupBody $pad={18}>
            <PasteButton>
              <PasteIcon><AllIcons.Paste /></PasteIcon>
              <PasteLabel>Colar</PasteLabel>
              <Caret />
            </PasteButton>
            <ClipTools>
              <ClipTool><AllIcons.Scissors /></ClipTool>
              <ClipTool><AllIcons.Copy /><Caret /></ClipTool>
              <ClipTool><AllIcons.FormatBrush /></ClipTool>
            </ClipTools>
          </GroupBody>
          <GroupLabel $start>Área de Transferência<Launch /></GroupLabel>
        </Group>

        <Group $w={296}>
          <GroupBody $pad={6} $column>
            <RibbonRow $top={20}>
              <Combo $w={132}>Calibri<Caret /></Combo>
              <Combo $w={63}>12<Caret /></Combo>
              <Slot $w={46}><GrowGlyph><Glyph $size={22}>A</Glyph><FontStep /></GrowGlyph></Slot>
              <Slot $w={46}><GrowGlyph><Glyph $size={20}>A</Glyph><FontStep down /></GrowGlyph></Slot>
            </RibbonRow>
            <RibbonRow $top={17}>
              <Slot $w={46}><Glyph $size={24} $weight={700}>N</Glyph></Slot>
              <Slot $w={44}><Glyph $size={24} $italic $weight={600}>I</Glyph></Slot>
              <Slot $w={36}><Glyph $size={24} $weight={700} $line>S</Glyph></Slot>
              <Slot $w={14}><Caret $off /></Slot>
              <Slot $w={38}><AllIcons.Borders /></Slot>
              <Slot $w={11}><Caret $off /></Slot>
              <Slot $w={42}><AllIcons.Fill /></Slot>
              <Slot $w={12}><Caret $off /></Slot>
              <Slot $w={24}><Glyph $size={26} $weight={600}>A</Glyph></Slot>
              <Slot $w={18}><Caret $off /></Slot>
            </RibbonRow>
          </GroupBody>
          <GroupLabel $shift={22}>Fonte<Launch /></GroupLabel>
        </Group>

        <Group $w={527}>
          <GroupBody $pad={12} $column>
            <RibbonRow $top={20}>
              <Slot $w={30}><svg width="24" height="18" viewBox="0 0 24 18"><Bars x={0} y={0} w={24} rows={4} /></svg></Slot>
              <Slot $w={62}><svg width="24" height="12" viewBox="0 0 24 12"><Bars x={0} y={1} w={24} rows={4} /></svg></Slot>
              <Slot $w={28}><svg width="24" height="22" viewBox="0 0 24 22"><Bars x={0} y={10} w={24} rows={4} /></svg></Slot>
              <Slot $w={62}><AllIcons.Orient /><Caret $off /></Slot>
              <Slot $w={49} />
              <AllIcons.Wrap />
              <DimText $left={6}>Quebrar Texto Automaticamente</DimText>
            </RibbonRow>
            <RibbonRow $top={17}>
              <Slot $w={30}><svg width="24" height="18" viewBox="0 0 24 18"><Bars x={0} y={0} w={24} rows={6} insets={[[0, 0], [0, 8]]} /></svg></Slot>
              <Slot $w={62}><svg width="24" height="18" viewBox="0 0 24 18"><Bars x={0} y={0} w={24} rows={6} insets={[[0, 0], [4, 4]]} /></svg></Slot>
              <Slot $w={28}><svg width="24" height="18" viewBox="0 0 24 18"><Bars x={0} y={0} w={24} rows={6} insets={[[0, 0], [8, 0]]} /></svg></Slot>
              <Slot $w={62}><AllIcons.Outdent /></Slot>
              <Slot $w={28}><AllIcons.Outdent flip /></Slot>
              <Slot $w={17} />
              <AllIcons.Merge />
              <DimText $left={5}>Mesclar e Centralizar</DimText>
              <Slot $w={30}><Caret $off /></Slot>
            </RibbonRow>
          </GroupBody>
          <GroupLabel $shift={22}>Alinhamento<Launch /></GroupLabel>
        </Group>

        <Group $w={240}>
          <GroupBody $pad={4} $column>
            <RibbonRow $top={20}>
              <Combo $w={230}><span /><Caret $off /></Combo>
            </RibbonRow>
            <RibbonRow $top={17}>
              <Slot $w={42}><AllIcons.Money /></Slot>
              <Slot $w={8}><Caret /></Slot>
              <Slot $w={42}><Glyph $size={26}>%</Glyph></Slot>
              <Slot $w={48}><Glyph $size={15}>000</Glyph></Slot>
              <Slot $w={42}><Decimal>←,0<br />,00</Decimal></Slot>
              <Slot $w={50}><Decimal>,00<br />→,0</Decimal></Slot>
            </RibbonRow>
          </GroupBody>
          <GroupLabel $shift={22}>Número<Launch /></GroupLabel>
        </Group>

        <Group $w={302}>
          <GroupBody>
            <BigButton $w={112}>
              <BigIcon><AllIcons.CondFormat /></BigIcon>
              <BigLabel $off><LabelLine>Formatação</LabelLine><LabelLine>Condicional <Caret $off /></LabelLine></BigLabel>
            </BigButton>
            <BigButton $w={106}>
              <BigIcon><AllIcons.TableFormat /></BigIcon>
              <BigLabel $off><LabelLine>Formatar como</LabelLine><LabelLine>Tabela <Caret $off /></LabelLine></BigLabel>
            </BigButton>
            <BigButton $w={82}>
              <BigIcon><AllIcons.CellStyle /></BigIcon>
              <BigLabel $off><LabelLine>Estilos de</LabelLine><LabelLine>Célula <Caret $off /></LabelLine></BigLabel>
            </BigButton>
          </GroupBody>
          <GroupLabel>Estilos</GroupLabel>
        </Group>

        <Group $w={218}>
          <GroupBody>
            <BigButton $w={80}>
              <BigIcon $rule><AllIcons.Insert /></BigIcon>
              <BigLabel><LabelLine>Inserir</LabelLine><LabelLine><Caret /></LabelLine></BigLabel>
            </BigButton>
            <BigButton $w={58}>
              <BigIcon $rule><AllIcons.Delete /></BigIcon>
              <BigLabel><LabelLine>Excluir</LabelLine><LabelLine><Caret /></LabelLine></BigLabel>
            </BigButton>
            <BigButton $w={78}>
              <BigIcon><AllIcons.Format /></BigIcon>
              <BigLabel><LabelLine>Formatar</LabelLine><LabelLine><Caret /></LabelLine></BigLabel>
            </BigButton>
          </GroupBody>
          <GroupLabel>Células</GroupLabel>
        </Group>

        <Group $w={240}>
          <GroupBody>
            <EditTools>
              <EditTool><Glyph $size={30}>Σ</Glyph><Caret /></EditTool>
              <EditTool><AllIcons.FillDown /><Caret /></EditTool>
              <EditTool><AllIcons.Eraser /><Caret /></EditTool>
            </EditTools>
            <BigButton $w={68}>
              <BigIcon><AllIcons.Sort /></BigIcon>
              <BigLabel><LabelLine>Classificar</LabelLine><LabelLine>e Filtrar <Caret /></LabelLine></BigLabel>
            </BigButton>
            <BigButton $w={100}>
              <BigIcon><AllIcons.Find /></BigIcon>
              <BigLabel><LabelLine>Localizar e</LabelLine><LabelLine>Selecionar <Caret /></LabelLine></BigLabel>
            </BigButton>
          </GroupBody>
          <GroupLabel>Edição</GroupLabel>
        </Group>
        <RibbonEnd>
          <svg width="14" height="9" viewBox="0 0 14 9" fill="none" stroke="#555" strokeWidth="1.6"><path d="M1 8 L7 2 L13 8" /></svg>
        </RibbonEnd>
      </Ribbon>

      <FormulaBar>
        <NameBox>A1<Caret /></NameBox>
        <Dots>⋮</Dots>
        <FxBox>
          <svg width="14" height="14" viewBox="0 0 14 14" stroke="#a8a8a8" strokeWidth="1.8"><path d="M1 1 L13 13 M13 1 L1 13" /></svg>
          <svg width="16" height="14" viewBox="0 0 16 14" fill="none" stroke="#a8a8a8" strokeWidth="2"><path d="M1 8 L6 13 L15 1" /></svg>
          <FxText>fx</FxText>
        </FxBox>
        <FormulaInput>
          <svg width="12" height="8" viewBox="0 0 12 8" fill="none" stroke="#555" strokeWidth="1.8"><path d="M1 1 L6 6 L11 1" /></svg>
        </FormulaInput>
      </FormulaBar>

      <SheetArea>
        <SheetMain>
          <ColumnHeader>
            <Corner><svg width="20" height="20" viewBox="0 0 20 20"><path d="M20 0 V20 H0 Z" fill="#b8b8b8" /></svg></Corner>
            {COLUMNS.map(([c, w], i) => <ColCell key={c} $w={w} $on={i === 0}>{c}</ColCell>)}
          </ColumnHeader>
          <SheetBody>
            <RowHeaders>
              {ROWS.map(([r, h], i) => <RowCell key={r} $h={h} $on={i === 0}>{r}</RowCell>)}
            </RowHeaders>
            <Canvas>
              <NavBar>
                <Logo>
                  <svg width="24" height="36" viewBox="0 0 24 36" fill="none" stroke="#fff">
                    <path d="M7 1.5 H17 Q21.5 1.5 21.5 6 V17 Q21.5 22 17 24 V26 H7 V24 Q2.5 22 2.5 17 V6 Q2.5 1.5 7 1.5 Z" strokeWidth="2.6" />
                    <path d="M8 29 H16 M10 32 H14" strokeWidth="1.8" />
                  </svg>
                  <LogoWord>LUZ</LogoWord>
                  <LogoSub>Planilhas<br />Empresariais</LogoSub>
                </Logo>
                <NavItem $w={184}>GRUPOS DE<br />CONTAS</NavItem>
                <NavItem $w={140}>LANÇAMENTOS</NavItem>
                <NavItem $w={178}>CONTROLE<br />FINANCEIRO</NavItem>
                <NavItem $w={146} $gap={7}>RELATÓRIOS</NavItem>
                <NavItem $w={162} $active>DASHBOARDS</NavItem>
                <NavItem $w={166}>INSTRUÇÕES</NavItem>
              </NavBar>
              <SubNav>
                <PlayBox>
                  <svg width="26" height="26" viewBox="0 0 26 26">
                    <circle cx="13" cy="13" r="11.2" fill="none" stroke="#e8262a" strokeWidth="2.8" />
                    <path d="M9.5 6.5 L19 13 L9.5 19.5 Z" fill="#e8262a" />
                  </svg>
                </PlayBox>
                {SUB_TABS.map(([t, w], i) => <SubItem key={t} $w={w} $active={i === 2}>{t}</SubItem>)}
              </SubNav>
              <Content>
                <FilterRow>
                  <FilterLabel $left={3} $w={74}>Conta:</FilterLabel>
                  <Select>RENDA FAMILIAR<SelectArrow /></Select>
                  <FilterLabel $left={33} $w={116}>Sub-Conta 1:</FilterLabel>
                  <ValueBox $w={355}>Salários</ValueBox>
                  <FilterLabel $left={28} $w={115}>Sub-Conta 2:</FilterLabel>
                  <ValueBox $w={373}>Comissões</ValueBox>
                </FilterRow>
                <TopRow>
                  <KpiColumn>
                    <SectionTitle $h={52} $size={17.5}>RENDA FAMILIAR</SectionTitle>
                    <Kpi>
                      <KpiValue>R$ 69.000</KpiValue>
                      <KpiNote>
                        <span>Esses R$69000 representam</span>
                        <span>84,4% do seu total de receitas</span>
                      </KpiNote>
                    </Kpi>
                  </KpiColumn>
                  <BarCard><BarChart /></BarCard>
                </TopRow>
                <BottomRow>
                  <Panel $w={628} $gap={20}>
                    <SectionTitle $h={49} $left={2}>Divisão percentual das receitas</SectionTitle>
                    <Card>
                      <DonutChart />
                      <Legend>
                        {LEGEND.map(([t, c]) => <LegendItem key={c}><LegendDot $color={c} />{t}</LegendItem>)}
                      </Legend>
                    </Card>
                  </Panel>
                  <Panel $w={356} $gap={13}>
                    <SectionTitle $h={49} $left={16}>Top 5 sub-contas</SectionTitle>
                    <TopTable>
                      {TOP5.map(([n, name, value]) => (
                        <React.Fragment key={n}>
                          <TopCell>{n}</TopCell>
                          <TopCell $shade>{name}</TopCell>
                          <TopCell $shade>{value}</TopCell>
                        </React.Fragment>
                      ))}
                    </TopTable>
                  </Panel>
                  <Panel $w={728} $gap={0}>
                    <SectionTitle $h={49}>Comparação das sub-contas 1 e 2:</SectionTitle>
                    <Card><LineChart /></Card>
                  </Panel>
                </BottomRow>
              </Content>
              <Selection />
            </Canvas>
          </SheetBody>
        </SheetMain>
        <VScroll>
          <ScrollArrow $h={25}><UpArrow /></ScrollArrow>
          <ScrollThumb />
          <ScrollRest />
          <ScrollArrow $h={21}><DownArrow /></ScrollArrow>
        </VScroll>
      </SheetArea>

      <TabsBar>
        <TabNav><MiniArrow left color="#217346" /><MiniArrow color="#217346" /><span>...</span></TabNav>
        {SHEETS.map(([t, w]) => <SheetTab key={t} $w={w}>{t}</SheetTab>)}
        <SheetTab $w={78} $active>DASH3</SheetTab>
        <MoreTab>[<MoreDots>...</MoreDots></MoreTab>
        <AddSheet>
          <svg width="22" height="22" viewBox="0 0 22 22" fill="none" stroke="#8a8a8a" strokeWidth="1.2"><circle cx="11" cy="11" r="10" /><path d="M11 5 V17 M5 11 H17" strokeWidth="1.8" /></svg>
          <span>⋮</span>
        </AddSheet>
        <HScroll>
          <HArrow><MiniArrow left /></HArrow>
          <HThumb />
          <HSpace />
          <HArrow><MiniArrow /></HArrow>
        </HScroll>
      </TabsBar>

      <StatusBar>
        <StatusLeft>
          <span>Pronto</span>
          <svg width="21" height="22" viewBox="0 0 21 22">
            <rect x="1" y="1" width="19" height="20" fill="#fff" stroke="#9a9a9a" />
            <rect x="1" y="1" width="19" height="5" fill="#777" />
            <circle cx="4" cy="4" r="4" fill="#666" />
            <path d="M5 9 H17 M5 12 H17 M5 15 H17 M5 18 H17" stroke="#999" strokeDasharray="2 1" />
          </svg>
        </StatusLeft>
        <ViewButton $w={45} $active>
          <svg width="22" height="22" viewBox="0 0 22 22"><CellGrid x={0} y={0} w={21} h={21} cols={3} rows={3} fill="#d2d2d2" line="#8e8e8e" /></svg>
        </ViewButton>
        <ViewButton $w={45}>
          <svg width="24" height="22" viewBox="0 0 24 22" fill="#fff" stroke="#8e8e8e"><rect x="0.5" y="0.5" width="23" height="21" /><rect x="5.5" y="3.5" width="13" height="15" /><path d="M8 7 H16 M8 10 H16 M8 13 H16" /></svg>
        </ViewButton>
        <ViewButton $w={44}>
          <svg width="24" height="22" viewBox="0 0 24 22" fill="#fff" stroke="#8e8e8e"><rect x="0.5" y="0.5" width="23" height="21" /><path d="M0 14.5 H24 M6 0 V14 M16 0 V14" fill="none" /></svg>
        </ViewButton>
        <Zoomer>
          <svg width="9" height="3" viewBox="0 0 9 3"><rect width="9" height="3" fill="#666" /></svg>
          <ZoomTrack><ZoomThumb /></ZoomTrack>
          <svg width="11" height="11" viewBox="0 0 11 11" stroke="#666" strokeWidth="1.8"><path d="M5.5 0 V11 M0 5.5 H11" /></svg>
          <ZoomValue>90%</ZoomValue>
        </Zoomer>
      </StatusBar>
      <BlackBar><BlackKey /></BlackBar>
    </Page>
  );
}
